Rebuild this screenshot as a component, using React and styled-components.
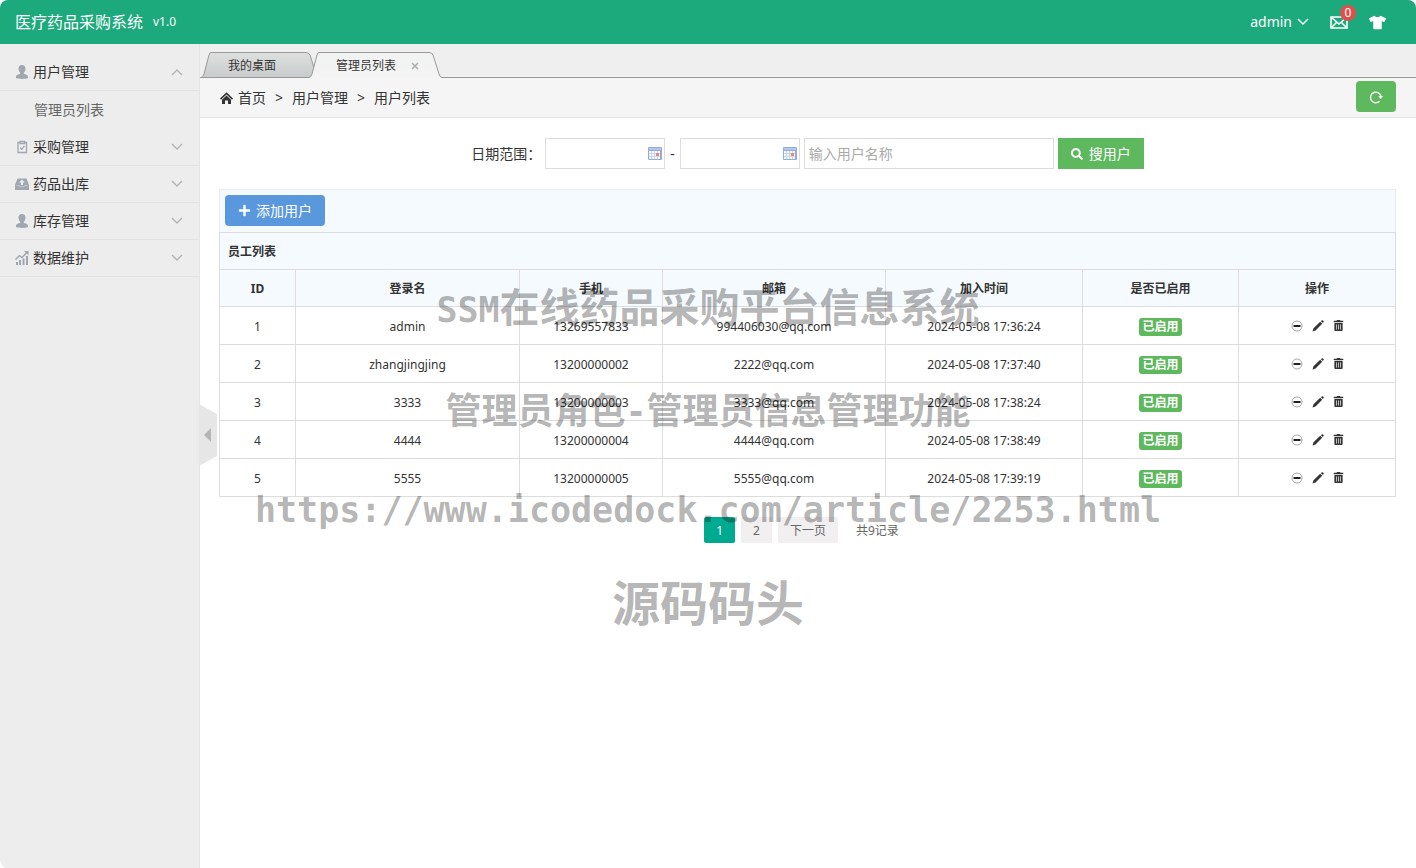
import React from 'react'
import styled, { createGlobalStyle, css } from 'styled-components'
import { FaTshirt, FaTrashAlt, FaSearch, FaPlus } from 'react-icons/fa'

const GlobalStyle = createGlobalStyle`
  * { box-sizing: border-box; }
  body {
    margin: 0;
    background: #fff;
    color: #333;
    font: 14px/20px 'Noto Sans', 'Noto Sans CJK SC', sans-serif;
  }
  button, input { font: inherit; }
  a { color: inherit; text-decoration: none; }
`

const Page = styled.div`
  position: relative;
  display: flex;
  flex-direction: column;
  min-height: 100vh;
  border-radius: 8px;
  overflow: hidden;
  background: #fff;
`

const Header = styled.header`
  display: flex;
  align-items: center;
  height: 44px;
  padding: 0 30px 0 15px;
  background: #1ca97b;
  color: #fff;
`
const Logo = styled.a`
  font-size: 16px;
`
const Version = styled.span`
  margin-left: 10px;
  font-size: 12px;
`
const UserNav = styled.nav`
  display: flex;
  align-items: center;
  gap: 21px;
  margin-left: auto;
`
const UserLink = styled.a`
  position: relative;
  display: flex;
  align-items: center;
  gap: 5px;
`
const Badge = styled.span`
  position: absolute;
  top: -11px;
  right: -8px;
  width: 16px;
  height: 16px;
  border-radius: 8px;
  background: #dd514c;
  font-size: 12px;
  line-height: 16px;
  text-align: center;
`

const Body = styled.div`
  display: flex;
  flex: 1;
`
const Aside = styled.aside`
  position: relative;
  flex: 0 0 200px;
  padding-top: 10px;
  border-right: 1px solid #e4e4e4;
  background: #ededed;
`
const Collapse = styled.button`
  position: absolute;
  z-index: 1;
  left: 199px;
  top: calc(50% - 52px);
  display: grid;
  place-items: center;
  width: 18px;
  height: 62px;
  padding: 0;
  border: 0;
  background: #e6e6e6;
  clip-path: polygon(0 0, 100% 16%, 100% 84%, 0 100%);
`
const MenuTitle = styled.a`
  display: flex;
  align-items: center;
  gap: 4px;
  height: 37px;
  padding: 0 16px 0 15px;
  border-bottom: 1px solid #e2e2e2;
  svg:first-child { flex: 0 0 14px; color: #a0a7b0; }
  svg:last-child { margin-left: auto; color: #b0b4b9; }
`
const SubItem = styled.a`
  display: block;
  padding: 9px 0 9px 34px;
  color: #666;
`

const Main = styled.main`
  flex: 1;
  min-width: 0;
`
const TabBar = styled.nav`
  display: flex;
  align-items: flex-end;
  height: 34px;
  padding-left: 1px;
  border-bottom: 1px solid #999;
  background: #efeff0;
`
const TabLink = styled.a`
  display: flex;
  position: relative;
  height: 26px;
  margin-bottom: -1px;
  font-size: 12px;
  line-height: 26px;
  & + & { margin-left: -10px; }
`
const TabLabel = styled.span`
  display: flex;
  align-items: center;
  gap: 15px;
  padding: ${p => (p.$active ? '0 6px 0 17px' : '0 26px 0 17px')};
  border-top: 1px solid #999;
  background: ${p => (p.$active ? 'linear-gradient(#f1f2f2, #f4f4f4)' : 'linear-gradient(#dedfdf, #c9cacb)')};
  ${p => !p.$active && css`box-shadow: inset 0 -1px #999;`}
`

const Breadcrumb = styled.nav`
  display: flex;
  align-items: center;
  gap: 9px;
  height: 40px;
  padding: 0 20px;
  border-bottom: 1px solid #e5e5e5;
  background: #f5f5f5;
`
const Home = styled.a`
  display: flex;
  align-items: center;
  gap: 5px;
`
const Button = styled.button`
  display: flex;
  align-items: center;
  justify-content: center;
  gap: ${p => (p.$square ? '6px' : '5px')};
  height: 31px;
  padding: 0 13px;
  border: 0;
  border-radius: ${p => (p.$square ? '0' : '4px')};
  background: ${p => (p.$primary ? '#5a98de' : '#5eb95e')};
  color: #fff;
  ${p => p.$end && css`margin: 0 0 2px auto;`}
`

const Content = styled.div`
  padding: 20px 20px 0 19px;
`
const Search = styled.form`
  display: flex;
  align-items: center;
  justify-content: center;
  gap: 4px;
`
const Dash = styled.span`
  padding: 0 1px;
`
const Input = styled.input`
  width: 250px;
  height: 31px;
  padding: 4px;
  border: 1px solid #ddd;
  background: #fff;
  &::placeholder { color: #aaa; }
`
const DateField = styled.span`
  display: flex;
  align-items: center;
  width: 120px;
  height: 31px;
  padding-right: 2px;
  border: 1px solid #ddd;
`
const DateInput = styled.input`
  flex: 1;
  min-width: 0;
  height: 29px;
  padding: 4px;
  border: 0;
  background: none;
`

const Toolbar = styled.div`
  display: flex;
  margin-top: 20px;
  padding: 5px;
  height: 43px;
  border: 1px solid #ebebeb;
  border-bottom: 0;
  background: #f5fafe;
`
const Table = styled.table`
  width: 100%;
  table-layout: fixed;
  border-collapse: collapse;
  font-size: 12px;
  line-height: 20px;
  th, td {
    padding: 2px 8px 0;
    border: 1px solid #ddd;
    text-align: center;
  }
  th { height: 37px; background: #f5fafe; }
  td { height: 38px; }
`
const TitleCell = styled.th`
  && { text-align: left; }
`
const Tag = styled.span`
  display: inline-block;
  padding: 0 3px;
  border-radius: 3px;
  background: #5eb95e;
  color: #fff;
  font-weight: bold;
  line-height: 18px;
  vertical-align: middle;
`
const Actions = styled.div`
  display: flex;
  justify-content: center;
  gap: 9px;
  margin-bottom: 2px;
`
const Action = styled.a`
  display: flex;
`

const Pager = styled.nav`
  display: flex;
  justify-content: center;
  align-items: center;
  gap: 6px;
  margin: 20px 12px 0 0;
  color: #666;
  font-size: 12px;
  line-height: 24px;
`
const PageLink = styled.a`
  padding: 2px 12px 0;
  border-radius: 2px;
  background: ${p => (p.$current ? '#00aa91' : '#f1eff0')};
  color: ${p => (p.$current ? '#fff' : '#666')};
`
const Total = styled.span`
  padding: 2px 0 0 12px;
`

const Watermark = styled.div`
  position: absolute;
  inset: 0;
  z-index: 2;
  display: flex;
  flex-direction: column;
  align-items: center;
  padding-top: 275px;
  color: rgba(0, 0, 0, 0.3);
  font-family: 'Noto Sans CJK SC', sans-serif;
  font-weight: bold;
  white-space: nowrap;
  pointer-events: none;
`
const MarkLine = styled.span`
  font-size: ${p => p.$size}px;
  line-height: ${p => p.$height}px;
`
const MarkLatin = styled.span`
  font-family: 'DejaVu Sans Mono', monospace;
  font-size: 35px;
`

const Chevron = ({ up }) => (
  <svg width="12" height="12" viewBox="0 0 12 12" fill="none" stroke="currentColor" strokeWidth="1.4">
    <path d={up ? 'M1 9l5-5 5 5' : 'M1 3l5 5 5-5'} />
  </svg>
)
const HomeIcon = () => (
  <svg width="13" height="12" viewBox="0 0 13 12" fill="#333">
    <path d="M0 6.500L6.500.300 13 6.500l-1 1.200-5.500-5.200L1 7.700z" />
    <path d="M2 7.700l4.500-4.200L11 7.700V12H8V8.500H5V12H2z" />
  </svg>
)
const UserIcon = () => (
  <svg width="14" height="14" viewBox="0 0 14 14" fill="currentColor">
    <path d="M7 0c2.300 0 3.500 1.600 3.500 3.700 0 1.700-.7 3.200-1.700 4v1.100c1.500.8 4.200 1 4.200 3.100V13c-3 1.200-9 1.200-12 0v-1.100c0-2.100 2.700-2.300 4.200-3.100V7.700c-1-.8-1.700-2.300-1.700-4C3.500 1.600 4.700 0 7 0z" />
  </svg>
)
const ClipIcon = () => (
  <svg width="14" height="14" viewBox="0 0 14 14" fill="none" stroke="currentColor" strokeWidth="1.300">
    <path d="M4.500 2.500H3v10h8.500v-10H10" />
    <path d="M5 1.500h4.600v2H5zM5 7.600l1.700 1.700 2.800-3.400" />
  </svg>
)
const OutIcon = () => (
  <svg width="14" height="14" viewBox="0 0 14 14" fill="currentColor">
    <path fillRule="evenodd" d="M2.500 1.500h9L14 8v5H0V8zM7 2.500L4.200 5.500h1.800V8h2V5.500h1.800z" />
    <path d="M1.500 8.500h2.700l.8 1.300h4l.8-1.300h2.700" fill="none" stroke="#ededed" strokeWidth=".5" />
  </svg>
)
const ChartIcon = () => (
  <svg width="14" height="14" viewBox="0 0 14 14" fill="currentColor">
    <path d="M1 11h2v3H1zM4 9h2v5H4zM7.500 7.500h2V14h-2zM11 5h2v9h-2z" />
    <path d="M.5 8.500l4-3.800 2.500 1.800L11.500 2" fill="none" stroke="currentColor" strokeWidth="1.500" />
    <path d="M9 0h4.500v4.500z" />
  </svg>
)
const MailIcon = () => (
  <svg width="18" height="13" viewBox="0 0 18 13" fill="none" stroke="currentColor" strokeWidth="1.600">
    <path d="M1 1h16v11H1zM1.500 1.500L9 8l7.500-6.500M1.500 11.500l5-5M16.500 11.500l-5-5" />
  </svg>
)
const RefreshIcon = () => (
  <svg width="14" height="14" viewBox="0 0 14 14" fill="none" stroke="currentColor" strokeWidth="1.400">
    <path d="M10.500 11.200A5.300 5.300 0 1 1 12 6.500" />
    <path d="M9.300 6h4.700l-2.300 3z" fill="currentColor" stroke="none" />
  </svg>
)
const CalendarIcon = () => (
  <svg width="14" height="13" viewBox="0 0 14 13">
    <rect width="14" height="13" rx="1" fill="#94acd9" />
    <path d="M1 1h12v2H1z" fill="#b4c7ea" />
    <path d="M1 4h11v8H1z" fill="#f4f7fc" />
    <path d="M3.500 4v8M6.500 4v8M9.500 4v8M1 6.500h11M1 9.500h11" stroke="#ccd7ec" />
    <path d="M8 6h3v3H8z" fill="#e88a7a" />
  </svg>
)
const StopIcon = () => (
  <svg width="12" height="12" viewBox="0 0 12 12">
    <circle cx="6" cy="6" r="5" fill="#fff" stroke="#aaa" />
    <path d="M2.500 6h7" stroke="#222" strokeWidth="2" />
  </svg>
)
const PencilIcon = () => (
  <svg width="12" height="12" viewBox="0 0 12 12" fill="#333">
    <path d="M.5 11.500l1-3.200 6.700-6.500 2 2-6.700 6.700zM8.900 1.200L10 .3q.5-.3 1 .2l.6.600q.4.500 0 1l-.8.900z" />
  </svg>
)
const CloseIcon = () => (
  <svg width="8" height="8" viewBox="0 0 8 8" stroke="#aab0b3" strokeWidth="1.600">
    <path d="M1 1l6 6M7 1L1 7" />
  </svg>
)

// slanted tab edges, filled with the same gradient as the tab label
const Slope = ({ name, width, edge, base, active }) => (
  <svg width={width} height="26" viewBox={`0 0 ${width} 26`}>
    <linearGradient id={name} x1="0" y1="0" x2="0" y2="1">
      <stop offset="0" stopColor={active ? '#f1f2f2' : '#dedfdf'} />
      <stop offset="1" stopColor={active ? '#f4f4f4' : '#c9cacb'} />
    </linearGradient>
    <path d={edge + base} fill={`url(#${name})`} />
    <path d={edge} fill="none" stroke="#999" />
    {!active && <path d={`M0 25.500h${width}`} stroke="#999" />}
  </svg>
)
const LEFT_EDGE = 'M0 25.500Q2 25.500 3 22L8 3Q8.500 .5 10 .5'
const RIGHT_EDGE = 'M0 .5h4Q7 .5 8 3l6 19Q15 25.500 17 25.500'

const Tab = ({ id, active, children }) => (
  <TabLink href="#">
    <Slope name={id + '-left'} width={10} edge={LEFT_EDGE} base="V26H0z" active={active} />
    <TabLabel $active={active}>{children}</TabLabel>
    <Slope name={id + '-right'} width={17} edge={RIGHT_EDGE} base="V26H0z" active={active} />
  </TabLink>
)

const menus = [
  { title: '用户管理', icon: UserIcon, items: ['管理员列表'] },
  { title: '采购管理', icon: ClipIcon },
  { title: '药品出库', icon: OutIcon },
  { title: '库存管理', icon: UserIcon },
  { title: '数据维护', icon: ChartIcon },
]

const columns = [
  ['ID', 76],
  ['登录名', 224],
  ['手机', 143],
  ['邮箱', 223],
  ['加入时间', 197],
  ['是否已启用', 156],
  ['操作', 157],
]

const users = [
  [1, 'admin', '13269557833', '994406030@qq.com', '2024-05-08 17:36:24'],
  [2, 'zhangjingjing', '13200000002', '2222@qq.com', '2024-05-08 17:37:40'],
  [3, '3333', '13200000003', '3333@qq.com', '2024-05-08 17:38:24'],
  [4, '4444', '13200000004', '4444@qq.com', '2024-05-08 17:38:49'],
  [5, '5555', '13200000005', '5555@qq.com', '2024-05-08 17:39:19'],
]

export default function App() {
  return (
    <Page>
      <GlobalStyle />
      <Header>
        <Logo href="#">医疗药品采购系统</Logo>
        <Version>v1.0</Version>
        <UserNav>
          <UserLink href="#">admin <Chevron /></UserLink>
          <UserLink href="#" aria-label="消息"><MailIcon /><Badge>0</Badge></UserLink>
          <UserLink href="#" aria-label="换肤"><FaTshirt size={17} /></UserLink>
        </UserNav>
      </Header>
      <Body>
        <Aside>
          {menus.map(({ title, icon: Icon, items }) => (
            <React.Fragment key={title}>
              <MenuTitle href="#"><Icon />{title}<Chevron up={!!items} /></MenuTitle>
              {items && items.map(name => <SubItem href="#" key={name}>{name}</SubItem>)}
            </React.Fragment>
          ))}
          <Collapse aria-label="收起菜单">
            <svg width="8" height="14" viewBox="0 0 8 14"><path d="M0 7l7-7v14z" fill="#b5b5b5" /></svg>
          </Collapse>
        </Aside>
        <Main>
          <TabBar>
            <Tab id="desktop">我的桌面</Tab>
            <Tab id="admins" active>管理员列表<CloseIcon /></Tab>
          </TabBar>
          <Breadcrumb>
            <Home href="#"><HomeIcon />首页</Home>
            <span>&gt;</span>
            <span>用户管理</span>
            <span>&gt;</span>
            <span>用户列表</span>
            <Button $end aria-label="刷新"><RefreshIcon /></Button>
          </Breadcrumb>
          <Content>
            <Search>
              <label htmlFor="from">日期范围：</label>
              <DateField><DateInput id="from" /><CalendarIcon /></DateField>
              <Dash>-</Dash>
              <DateField><DateInput aria-label="结束日期" /><CalendarIcon /></DateField>
              <Input aria-label="用户名称" placeholder="输入用户名称" />
              <Button type="button" $square><FaSearch size={12} />搜用户</Button>
            </Search>
            <Toolbar>
              <Button $primary><FaPlus size={13} />添加用户</Button>
            </Toolbar>
            <Table>
              <colgroup>
                {columns.map(([name, width]) => <col key={name} width={width} />)}
              </colgroup>
              <thead>
                <tr><TitleCell colSpan={7}>员工列表</TitleCell></tr>
                <tr>{columns.map(([name]) => <th key={name}>{name}</th>)}</tr>
              </thead>
              <tbody>
                {users.map(user => (
                  <tr key={user[0]}>
                    {user.map(value => <td key={value}>{value}</td>)}
                    <td><Tag>已启用</Tag></td>
                    <td>
                      <Actions>
                        <Action href="#" aria-label="停用"><StopIcon /></Action>
                        <Action href="#" aria-label="编辑"><PencilIcon /></Action>
                        <Action href="#" aria-label="删除"><FaTrashAlt size={11} /></Action>
                      </Actions>
                    </td>
                  </tr>
                ))}
              </tbody>
            </Table>
            <Pager>
              <PageLink href="#" $current>1</PageLink>
              <PageLink href="#">2</PageLink>
              <PageLink href="#">下一页</PageLink>
              <Total>共9记录</Total>
            </Pager>
          </Content>
        </Main>
      </Body>
      <Watermark>
        <MarkLine $size={40} $height={60}><MarkLatin>SSM</MarkLatin>在线药品采购平台信息系统</MarkLine>
        <MarkLine $size={36} $height={136}>管理员角色<MarkLatin>-</MarkLatin>管理员信息管理功能</MarkLine>
        <MarkLine $size={35} $height={54}><MarkLatin>https://www.icodedock.com/article/2253.html</MarkLatin></MarkLine>
        <MarkLine $size={48} $height={126}>源码码头</MarkLine>
      </Watermark>
    </Page>
  )
}
